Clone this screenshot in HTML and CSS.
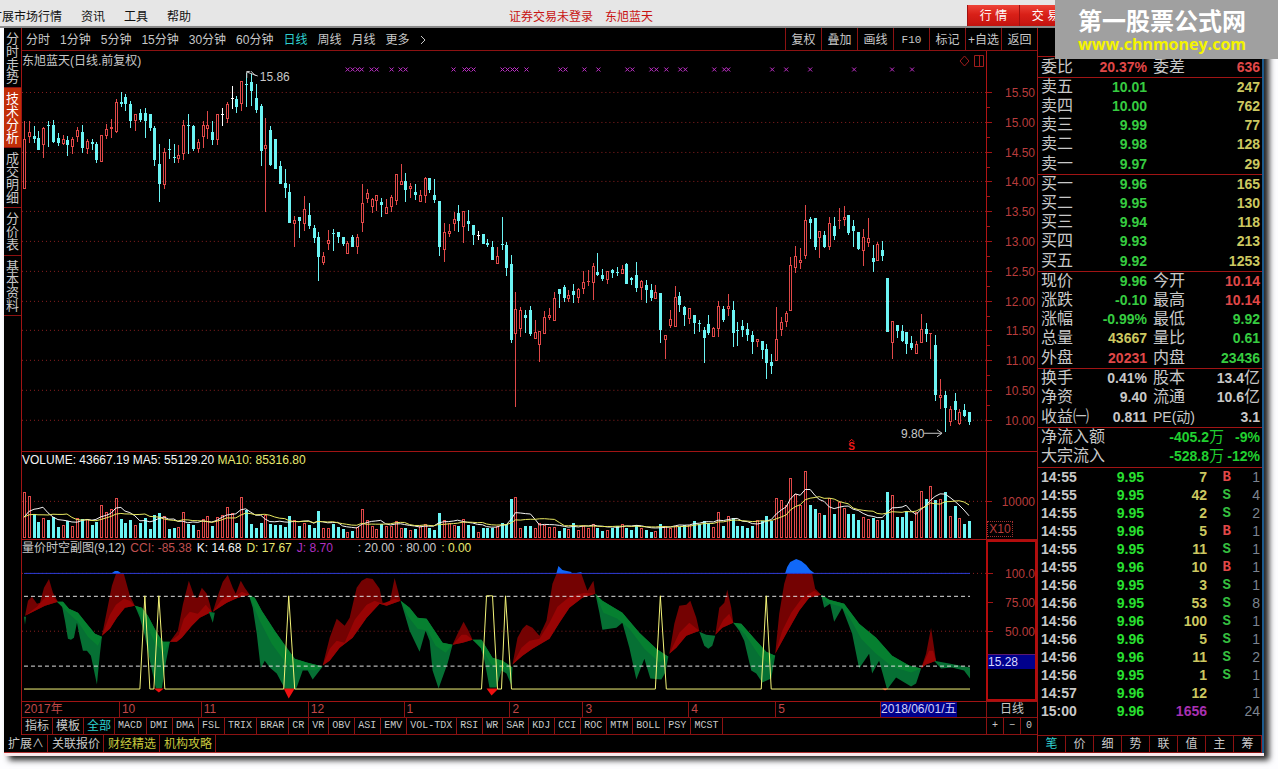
FILE: index.html
```html
<!DOCTYPE html>
<html lang="zh-CN">
<head>
<meta charset="utf-8">
<title>东旭蓝天 日线</title>
<link rel="stylesheet" href="styles.css">
</head>
<body>
<header class="menubar">
  <nav class="menu">
    <button>扩展市场行情</button><button>资讯</button><button>工具</button><button>帮助</button>
  </nav>
  <div class="session"><span>证券交易未登录</span><span>东旭蓝天</span></div>
  <div class="modes"><button>行 情</button><button>交 易</button></div>
</header>

<main class="window">
  <section class="left">
    <div class="workspace">
      <nav class="side-tabs">
        <button class="side-4">分时走势</button>
        <button class="side-4 active">技术分析</button>
        <button class="side-4">成交明细</button>
        <button class="side-3">分价表</button>
        <button class="side-4">基本资料</button>
      </nav>
      <div class="stack">
        <div class="toolbar">
          <div class="periods">
            <button>分时</button><button>1分钟</button><button>5分钟</button><button>15分钟</button><button>30分钟</button><button>60分钟</button><button class="on">日线</button><button>周线</button><button>月线</button><button>更多</button><button aria-label="展开"><svg width="6" height="10" viewBox="0 0 6 10"><path d="M1 1L5 5L1 9"/></svg></button>
          </div>
          <div class="actions">
            <button>复权</button><button>叠加</button><button>画线</button><button class="song">F10</button><button>标记</button><button>+自选</button><button>返回</button>
          </div>
        </div>

        <div class="row price-row">
          <div class="plot">
            <svg id="price" class="fill" viewBox="22 51 965 400" preserveAspectRatio="none"></svg>
            <p class="legend title">东旭蓝天(日线.前复权)</p>
            <svg class="corner" width="26" height="12" viewBox="0 0 26 12"><path d="M5.5 1L10 6L5.5 11L1 6Z M15.5 .5H24.5V11.5H15.5Z M20.5 .5V11.5"/></svg>
          </div>
          <div class="axis price-axis">
            <span>15.50</span><span>15.00</span><span>14.50</span><span>14.00</span><span>13.50</span><span>13.00</span><span>12.50</span><span>12.00</span><span>11.50</span><span>11.00</span><span>10.50</span><span>10.00</span>
          </div>
        </div>

        <div class="row volume-row">
          <div class="plot">
            <svg id="volume" class="fill" viewBox="22 452 965 87" preserveAspectRatio="none"></svg>
            <p class="legend"><span class="white">VOLUME: 43667.19</span> <span class="white">MA5: 55129.20</span> <span class="yellow">MA10: 85316.80</span></p>
          </div>
          <div class="axis volume-axis"><span>10000</span><span class="unit">X10</span></div>
        </div>

        <div class="row indicator-row">
          <div class="plot">
            <svg id="indicator" class="fill" viewBox="22 539 965 162" preserveAspectRatio="none">
              <path class="grid-dot" d="M22 572.5H987M22 630.5H987"/>
              <g class="bull-dark">
                <path d="M25 615L28 600L32 596L37 603L40 602L44 587L49 578L53 592L58 601L45 605L37 609Z"/>
                <path d="M102 635L107 610L112 585L116 573H124L130 595L135 605L125 607L117 617L110 628Z"/>
                <path d="M170 641L178 630L183 604L189 580L195 597L198 597L202 587L207 593L210 603L212 611L200 617L192 625L182 637L177 641Z"/>
                <path d="M213 611L218 595L223 581L228 574L233 587L236 593L241 580L245 587L250 594L238 597L227 602Z"/>
                <path d="M323 665L330 637L337 618L345 625L350 617L357 587L362 580L367 577L373 578L380 588L383 602H390L395 577L401 600L387 605L380 603L367 617L353 637L340 647L330 660Z"/>
                <path d="M453 644L458 633L464 621L469 630L473 639L463 642Z"/>
                <path d="M513 664L518 637L523 628L527 624L533 627L540 635L547 620L553 583L557 573H582L588 590L594 580L596 593L583 597L570 607L560 622L550 638L533 648L523 655Z"/>
                <path d="M670 653L675 623L680 605L687 604L691 600L697 617L700 630L687 635L677 647Z"/>
                <path d="M716 634L720 607L725 602L728 589L732 607L734 622L723 627Z"/>
                <path d="M776 653L780 613L785 583L788 573H813L816 588L822 594L810 597L800 610L787 633Z"/>
                <path d="M922 668L927 653L932 627L937 660L927 664Z"/>
              </g>
              <g class="bull">
                <path d="M25 615L37 606L44 598L50 594L58 601L45 605L37 609Z"/>
                <path d="M102 635L110 614L116 604L124 598L130 600L135 605L125 607L117 617L110 628Z"/>
                <path d="M170 641L179 634L184 618L190 611L198 613L206 604L212 611L200 617L192 625L182 637L177 641Z"/>
                <path d="M213 611L221 600L228 594L235 596L242 591L250 594L238 597L227 602Z"/>
                <path d="M323 665L330 648L337 640L345 642L355 619L367 604L375 600L383 603L395 598L401 600L387 605L380 603L367 617L353 637L340 647L330 660Z"/>
                <path d="M453 644L462 634L467 634L473 639L463 642Z"/>
                <path d="M513 664L522 647L530 640L540 638L550 622L558 606L570 596L585 592L596 593L583 597L570 607L560 622L550 638L533 648L523 655Z"/>
                <path d="M670 653L680 632L690 622L700 630L687 635L677 647Z"/>
                <path d="M716 634L724 619L730 613L734 622L723 627Z"/>
                <path d="M776 653L783 630L792 612L803 597L815 590L822 594L810 597L800 610L787 633Z"/>
                <path d="M922 668L930 650L934 650L937 660L927 664Z"/>
              </g>
              <g class="bear-dark">
                <path d="M24 616H26L25 624Z M209 611L215 612L213 622Z"/>
                <path d="M57 601H63L69 608L78 612L86 622L95 633L102 636L100 653L97 684L91 655L87 650H83L80 637L77 622L74 637L71 639L68 638L65 620L62 605Z"/>
                <path d="M135 605L142 607L148 615L157 632L163 641H170L166 662L162 688H156L150 660L145 635L140 617Z"/>
                <path d="M249 594L255 597L262 610L275 630L287 647L295 658L307 662L323 666L313 679L308 670H303L297 687L293 690L285 688L277 673L270 667L265 660L261 668L257 633L253 607Z"/>
                <path d="M401 600L410 607L418 617L427 618L433 627L443 642L453 644L448 663L439 688L433 670L430 640L426 630L420 651L410 630L405 613Z"/>
                <path d="M473 639H482L493 657L503 660L513 667L512 685L507 673L502 670L497 687H490L485 660L480 643Z"/>
                <path d="M596 593L603 600L623 612L640 632L657 648L669 656L666 672L662 679L651 678L645 658L637 679L630 647L623 622L617 627L603 629L600 612Z"/>
                <path d="M700 631L707 634L716 635L713 645L709 648L705 645Z"/>
                <path d="M734 622L742 623L757 640L767 651L776 655L772 678L763 682L757 673L752 670L745 640L740 630Z"/>
                <path d="M822 594L830 599L845 603L860 623L877 637L893 655L910 665L922 668L917 683L912 686L897 677L888 689L880 660L873 673L870 653L860 668L853 633L843 607L835 621L831 603L825 607Z"/>
                <path d="M935 660L950 663L971 667V678L965 670L953 667L942 668Z"/>
              </g>
              <g class="bear">
                <path d="M57 601H63L69 608L78 612L86 622L95 633L102 636L98 645L88 636L78 621L68 612Z"/>
                <path d="M135 605L142 607L148 615L157 632L163 641H170L164 652L155 642L147 625Z"/>
                <path d="M249 594L255 597L262 610L275 630L287 647L295 658L307 662L323 666L315 670L300 668L288 665L272 643L260 620Z"/>
                <path d="M401 600L410 607L418 617L427 618L433 627L443 642L453 644L446 652L436 645L428 630L418 628L408 615Z"/>
                <path d="M473 639H482L493 657L503 660L513 667L508 670L492 664L482 648Z"/>
                <path d="M596 593L603 600L623 612L640 632L657 648L669 656L660 662L645 648L630 628L618 618L604 612Z"/>
                <path d="M734 622L742 623L757 640L767 651L776 655L770 664L760 655L746 634Z"/>
                <path d="M822 594L830 599L845 603L860 623L877 637L893 655L910 665L922 668L912 672L893 666L877 653L862 638L850 616L842 606L828 602Z"/>
              </g>
              <path class="over" d="M112 572L115 570H118L121 572Z M557 572L559 565L563 569L572 571V572Z M577 572L582 571V572Z M786 572L788 566L791 561L797 558L802 560L807 564L811 569L815 572Z"/>
              <path class="under" d="M154 688H164L159 692Z M284 688H295L289 698Z M487 688H499L492 695Z M883 688H889L886 690Z"/>
              <path class="limit" d="M24 572.5H971"/>
              <path class="bands" d="M24 595.5H971M24 665.5H971"/>
              <path class="signal" d="M24 688.5H140L145 595L150 688.5H154L159 595L165 688.5H284L289 595L295 688.5H482L487 595H493L498 688.5H502L506 595L512 688.5H656L661 595L667 688.5H762L767 595L772 688.5H971"/>
            </svg>
            <p class="legend spaced"><span>量价时空副图(9,12)</span><span class="rose">CCI: -85.38</span><span class="white">K: 14.68</span><span class="yellow">D: 17.67</span><span class="violet">J: 8.70</span><span class="levels">: 20.00</span><span>: 80.00</span><span class="yellow">: 0.00</span></p>
          </div>
          <div class="axis indicator-axis"><span>100.0</span><span>75.00</span><span>50.00</span><span class="cursor">15.28</span></div>
        </div>

        <div class="dates">
          <div class="months">
            <span>2017年</span><span>10</span><span>11</span><span>12</span><span>1</span><span>2</span><span>3</span><span>4</span><span>5</span><span><b>2018/06/01/五</b></span>
          </div>
          <div class="cycle">日线</div>
        </div>

        <div class="indicators">
          <button class="cjk">指标</button><button class="cjk">模板</button><button class="cjk on">全部</button><button>MACD</button><button>DMI</button><button>DMA</button><button>FSL</button><button>TRIX</button><button>BRAR</button><button>CR</button><button>VR</button><button>OBV</button><button>ASI</button><button>EMV</button><button>VOL-TDX</button><button>RSI</button><button>WR</button><button>SAR</button><button>KDJ</button><button>CCI</button><button>ROC</button><button>MTM</button><button>BOLL</button><button>PSY</button><button>MCST</button>
          <div class="zoom"><button>+</button><button>−</button><button>0</button></div>
        </div>
      </div>
    </div>
    <nav class="extras">
      <button>扩展∧</button><button>关联报价</button><button class="gold">财经精选</button><button class="gold">机构攻略</button>
    </nav>
  </section>

  <aside class="quote">
    <div class="head"></div>
    <table class="book">
      <colgroup><col class="c1"><col class="c2"><col class="c3"><col></colgroup>
      <tbody>
        <tr><th>委比</th><td class="red">20.37%</td><th class="second">委差</th><td class="red">636</td></tr>
      </tbody>
      <tbody>
        <tr><th>卖五</th><td class="green">10.01</td><td></td><td class="qty">247</td></tr>
        <tr><th>卖四</th><td class="green">10.00</td><td></td><td class="qty">762</td></tr>
        <tr><th>卖三</th><td class="green">9.99</td><td></td><td class="qty">77</td></tr>
        <tr><th>卖二</th><td class="green">9.98</td><td></td><td class="qty">128</td></tr>
        <tr><th>卖一</th><td class="green">9.97</td><td></td><td class="qty">29</td></tr>
      </tbody>
      <tbody>
        <tr><th>买一</th><td class="green">9.96</td><td></td><td class="qty">165</td></tr>
        <tr><th>买二</th><td class="green">9.95</td><td></td><td class="qty">130</td></tr>
        <tr><th>买三</th><td class="green">9.94</td><td></td><td class="qty">118</td></tr>
        <tr><th>买四</th><td class="green">9.93</td><td></td><td class="qty">213</td></tr>
        <tr><th>买五</th><td class="green">9.92</td><td></td><td class="qty">1253</td></tr>
      </tbody>
      <tbody>
        <tr><th>现价</th><td class="green">9.96</td><th class="second">今开</th><td class="red">10.14</td></tr>
        <tr><th>涨跌</th><td class="green">-0.10</td><th class="second">最高</th><td class="red">10.14</td></tr>
        <tr><th>涨幅</th><td class="green">-0.99%</td><th class="second">最低</th><td class="green">9.92</td></tr>
        <tr><th>总量</th><td class="qty">43667</td><th class="second">量比</th><td class="green">0.61</td></tr>
        <tr><th>外盘</th><td class="red">20231</td><th class="second">内盘</th><td class="green">23436</td></tr>
      </tbody>
      <tbody>
        <tr><th>换手</th><td>0.41%</td><th class="second">股本</th><td>13.4<i>亿</i></td></tr>
        <tr><th>净资</th><td>9.40</td><th class="second">流通</th><td>10.6<i>亿</i></td></tr>
        <tr><th>收益㈠</th><td>0.811</td><th class="second pe">PE(动)</th><td>3.1</td></tr>
      </tbody>
    </table>
    <table class="flow">
      <tr><th>净流入额</th><td>-405.2<i>万</i></td><td class="pct">-9%</td></tr>
      <tr><th>大宗流入</th><td>-528.8<i>万</i></td><td class="pct">-12%</td></tr>
    </table>
    <table class="ticks">
      <colgroup><col class="t1"><col class="t2"><col class="t3"><col class="t4"><col></colgroup>
      <tr><td>14:55</td><td>9.95</td><td>7</td><td class="buy">B</td><td>1</td></tr>
      <tr><td>14:55</td><td>9.95</td><td>42</td><td>S</td><td>4</td></tr>
      <tr><td>14:55</td><td>9.95</td><td>2</td><td>S</td><td>2</td></tr>
      <tr><td>14:55</td><td>9.96</td><td>5</td><td class="buy">B</td><td>1</td></tr>
      <tr><td>14:55</td><td>9.95</td><td>11</td><td>S</td><td>1</td></tr>
      <tr><td>14:55</td><td>9.96</td><td>10</td><td class="buy">B</td><td>1</td></tr>
      <tr><td>14:56</td><td>9.95</td><td>3</td><td>S</td><td>1</td></tr>
      <tr><td>14:56</td><td>9.95</td><td>53</td><td>S</td><td>8</td></tr>
      <tr><td>14:56</td><td>9.96</td><td>100</td><td>S</td><td>1</td></tr>
      <tr><td>14:56</td><td>9.96</td><td>5</td><td>S</td><td>1</td></tr>
      <tr><td>14:56</td><td>9.96</td><td>11</td><td>S</td><td>2</td></tr>
      <tr><td>14:56</td><td>9.95</td><td>1</td><td>S</td><td>1</td></tr>
      <tr><td>14:57</td><td>9.96</td><td>12</td><td></td><td>1</td></tr>
      <tr><td>15:00</td><td>9.96</td><td class="big">1656</td><td></td><td>24</td></tr>
    </table>
    <nav class="quote-tabs">
      <button class="on">笔</button><button>价</button><button>细</button><button>势</button><button>联</button><button>值</button><button>主</button><button>筹</button>
    </nav>
  </aside>
</main>

<div class="badge"><strong>第一股票公式网</strong><a href="#">www.chnmoney.com</a></div>
<script src="chart.js"></script>
</body>
</html>
```

FILE: styles.css
```css
* { box-sizing: border-box; }

html { height: 100%; }

body {
  margin: 0;
  min-height: 100%;
  display: flex;
  flex-direction: column;
  position: relative;
  background: #fdfdff;
  color: #c8c8c8;
  font: 12px/16px "Liberation Sans", "Noto Sans CJK SC", sans-serif;
  overflow: hidden;
}

button {
  margin: 0;
  padding: 0;
  border: 0;
  background: none;
  color: inherit;
  font: inherit;
  white-space: nowrap;
}

p { margin: 0; }

/* Top menu */
.menubar {
  height: 28px;
  display: grid;
  grid-template-columns: 509fr 458fr 311fr;
  align-items: center;
  padding-top: 5px;
  background: #e6e6e6;
  border-bottom: 2px solid #8f8f8f;
  color: #111;
}

.menu { display: flex; gap: 19px; margin-left: -10px; padding-top: 2px; }

.session { display: flex; gap: 12px; color: #c81414; padding-top: 2px; }

.modes { display: flex; align-self: stretch; }

.modes button {
  width: 52px;
  flex: none;
  color: #fff;
  background: linear-gradient(#ee4438, #d92018 45%, #c41410);
  border-left: 1px solid #a01010;
}

/* Window */
.window {
  flex: 1;
  display: grid;
  grid-template-columns: 1fr 226px;
  margin: 0 14px 13px 4px;
  background: #000;
  border-bottom: 3px solid #fbe9ec;
  box-shadow: 5px 4px 6px 0 #222;
}

.left { display: flex; flex-direction: column; min-width: 0; border-right: 1px solid #a01414; }

.workspace { flex: 1; display: flex; min-height: 0; }

.side-tabs { width: 17px; display: flex; flex-direction: column; }

.side-tabs button {
  padding: 0 2px;
  font-size: 13px;
  line-height: 13px;
  white-space: normal;
  border-bottom: 1px solid #8c1212;
}

.side-4 { height: 60px; }
.side-3 { height: 48px; }
.side-tabs .active { background: #c22e08; color: #fff; }

.stack {
  flex: 1;
  min-width: 0;
  display: flex;
  flex-direction: column;
  border-left: 1px solid #a01414;
}

/* Toolbar */
.toolbar {
  height: 23px;
  display: flex;
  justify-content: space-between;
  border-bottom: 1px solid #8c1212;
}

.periods { display: flex; gap: 10px; padding: 1px 0 0 4px; }
.periods svg { display: block; fill: none; stroke: #c8c8c8; }
.actions { display: flex; }
.actions button { width: 36px; padding-top: 1px; border-left: 1px solid #8c1212; }

.on { color: #2fd0d0; }

.song { font-family: "Liberation Mono", monospace; font-size: 11px; }

/* Chart rows */
.row { display: flex; min-height: 0; }
.price-row { flex: 401; border-bottom: 1px solid #a01414; }
.volume-row { flex: 87; border-bottom: 1px solid #a01414; }
.indicator-row { flex: 162; border-bottom: 1px solid #a01414; }

.plot { flex: 1; min-width: 0; position: relative; }

.fill { position: absolute; inset: 0; width: 100%; height: 100%; display: block; }

.legend { position: absolute; left: 0; top: 0; white-space: pre; line-height: 16px; }
.spaced { display: flex; gap: 5px; }
.title { top: 2px; }

.corner { position: absolute; right: 1px; top: 4px; fill: none; stroke: #a01c1c; }

.white { color: #f4f4f4; }
.yellow { color: #e8e870; }
.rose { color: #c05050; }
.violet { color: #b030c0; }
.levels { padding-left: 20px; }

.axis {
  width: 51px;
  flex: none;
  display: flex;
  flex-direction: column;
  border-left: 1px solid #b01414;
  color: #b83c3c;
  text-align: right;
  line-height: 14px;
  padding-right: 2px;
}

.axis span { position: relative; }

.axis span::before {
  content: "";
  position: absolute;
  left: 0;
  top: 6px;
  width: 5px;
  border-top: 1px solid #a01414;
}

.price-axis { justify-content: space-between; padding-top: 35px; padding-bottom: 23px; }

.price-axis span:not(:last-child)::after {
  content: "";
  position: absolute;
  left: 0;
  top: 21px;
  width: 3px;
  border-top: 1px solid #a01414;
}

.volume-axis { justify-content: flex-end; gap: 12px; padding-bottom: 2px; }

.volume-axis .unit {
  width: 26px;
  border: 1px dotted #a03030;
  text-align: center;
}

.axis .unit::before, .axis .cursor::before { display: none; }

.indicator-axis { border: 2px solid #b40c0c; padding: 25px 0 0 0; }
.indicator-axis span { margin-bottom: 15px; }

.indicator-axis .cursor {
  background: #00008c;
  border-top: 1px solid #5a1a70;
  color: #d8d8ff;
  text-align: left;
}

/* Chart drawing */
.grid-dot { fill: none; stroke: #8c2020; stroke-dasharray: 1 3; }
.up { fill: #000; stroke: #e04848; }
.up-wick { fill: #e04848; }
.down { fill: #6cf4f4; }
.flat { fill: #fff; }
.mark { fill: none; stroke: #c030c8; }
.ma5 { fill: none; stroke: #f4f4f4; }
.ma10 { fill: none; stroke: #e8e860; }
.callout { fill: none; stroke: #c8c8c8; }
.note { fill: #c8c8c8; font-size: 12px; }
.ex { fill: #f01818; font-size: 10px; font-weight: bold; }
.ex-line { fill: none; stroke: #f01818; }
.bull-dark { fill: #740202; }
.bull { fill: #980404; }
.bear-dark { fill: #067034; }
.bear { fill: #068030; }
.over { fill: #1068f8; }
.under { fill: #f01010; }
.limit { stroke: #2c3cd8; }
.bands { stroke: #e0e0e0; stroke-dasharray: 4 3; }
.signal { fill: none; stroke: #f4f478; }

/* Date scale */
.dates { display: flex; height: 16px; border-bottom: 1px solid #8c1212; }

.months {
  flex: 1;
  display: grid;
  grid-template-columns: 97fr 82fr 107fr 96fr 106fr 73fr 106fr 87fr 105fr 106fr;
  color: #c04848;
  line-height: 15px;
}

.months span { padding-left: 2px; border-left: 1px solid #8c1212; white-space: nowrap; }
.months span:first-child { border-left: 0; }
.months span:last-child { padding-left: 0; }

.months b {
  display: inline-block;
  font-weight: normal;
  background: #00008c;
  color: #d0d0f8;
}

.cycle { width: 51px; text-align: center; line-height: 15px; border-left: 1px solid #8c1212; }

/* Indicator tabs */
.indicators {
  display: flex;
  height: 17px;
  border-bottom: 1px solid #8c1212;
  font: 10px/16px "Liberation Mono", monospace;
}

.indicators > button { padding: 0 4px; border-right: 1px solid #8c1212; }
.indicators > button:nth-child(n+4) { padding: 0 4px 0 3px; }
.indicators > .cjk { font: 12px/16px "Liberation Sans", "Noto Sans CJK SC", sans-serif; padding: 0 3px; }

.zoom { display: flex; width: 51px; margin-left: auto; border-left: 1px solid #8c1212; }
.zoom button { flex: 1; }
.zoom button + button { border-left: 1px solid #8c1212; }

.extras { display: flex; height: 18px; border-bottom: 1px solid #b03030; }
.extras button { padding: 0 3px 0 4px; border-right: 1px solid #8c1212; }
.gold { color: #c8c83c; }

/* Quote panel */
.quote {
  display: flex;
  flex-direction: column;
  border-right: 2px solid #1c5a8c;
  font-size: 14px;
  line-height: 18px;
}

.head { height: 28px; }

.quote table {
  width: 100%;
  table-layout: fixed;
  border-collapse: collapse;
  font-weight: bold;
}

.quote th, .quote i {
  font: 16px/18px "Liberation Sans", "Noto Sans CJK SC", sans-serif;
}

.quote th { padding: 0 0 0 3px; text-align: left; white-space: nowrap; }
.quote td { padding: 0 2px 0 0; text-align: right; }

.book tbody { border-top: 1px solid #a01414; }
.book tr, .flow tr { height: 19px; }
.book tbody tr:last-child { height: 21px; }
.book tbody:last-child tr:last-child { height: 20px; }
.c1 { width: 50px; }
.c2 { width: 61px; }
.c3 { width: 46px; }
.quote .second { padding-left: 4px; }
.quote .pe { font-size: 14px; }

.red { color: #e04848; }
.green { color: #36cc40; }
.qty { color: #ccc860; }

.flow, .ticks { border-top: 1px solid #a01414; }
.quote .flow { color: #20d030; margin-bottom: 2px; }
.flow th { color: #c8c8c8; width: 80px; }
.flow .pct { width: 36px; }
.flow i { font-size: 15px; }

.ticks tr { height: 18px; }
.t1 { width: 48px; }
.t2 { width: 60px; }
.t3 { width: 63px; }
.t4 { width: 24px; }
.ticks td:first-child { text-align: left; padding-left: 3px; }
.ticks td:nth-child(2) { color: #28e030; }
.ticks td:nth-child(3) { color: #ccc860; }
.ticks td:nth-child(4) { color: #36c040; font-family: "Liberation Mono", monospace; }
.ticks td:nth-child(5) { color: #7c8490; font-weight: normal; }
.ticks .buy.buy { color: #e04848; }
.ticks .big.big { color: #a830b0; }

.quote-tabs {
  display: grid;
  grid-template-columns: repeat(8, 1fr);
  height: 18px;
  margin-top: auto;
  border: solid #8c1212;
  border-width: 1px 0;
}

.quote-tabs button { font-size: 12px; line-height: 16px; border-right: 1px solid #8c1212; }

/* Site badge */
.badge {
  position: absolute;
  top: 0;
  right: 0;
  width: 223px;
  height: 59px;
  padding: 5px 0 0 23px;
  display: flex;
  flex-direction: column;
  background: #a0a0a0;
}

.badge strong { font: bold 24px/29px "Noto Sans CJK SC", sans-serif; color: #fff; }

.badge a {
  font: bold 16px/20px "Open Sans", sans-serif;
  color: #f4f400;
  text-decoration: none;
}
```

FILE: chart.js
```js
// One entry per trading day: kind (r up, c down, w flat), high, body top, body bottom, low.
const days = `r121,139,189,189 r121,132,137,143 c126,136,139,143 c131,138,150,150 r127,128,145,158 c121,125,126,147 c120,125,142,143 c133,138,143,146 r135,139,144,145 c136,140,145,156 r137,139,147,154 r127,130,137,142 c125,132,148,153 r139,141,149,154 c139,142,144,150 c142,144,160,163 r135,135,162,162 r124,129,136,139 r119,127,129,138 r99,102,132,133
c92,102,104,107 c94,97,104,111 c101,104,121,128 r114,114,121,131 c109,113,120,122 c108,113,121,138 c114,114,128,131 c126,128,160,166 c144,164,184,202 r148,152,185,189 c139,149,150,159 c144,157,158,163 r145,155,159,163 r120,125,154,160 c114,125,126,154 c125,126,149,151 r139,142,149,153 r121,125,137,148 r111,125,129,139 c121,132,140,145
r114,114,140,145 w108,114,115,126 r102,104,119,123 w86,98,99,109 c96,99,107,113 r81,81,104,111 c73,84,85,107 c74,82,91,106 c84,98,110,113 c104,106,151,166 r118,145,149,212 c126,130,165,166 c139,139,169,169 c161,166,184,184 c169,183,188,198 c184,192,223,223 r216,220,224,247 c217,217,221,238 r196,209,224,231 c203,215,226,229
c225,228,238,243 c232,237,257,281 r252,256,263,265 r230,240,244,250 c229,233,234,251 c232,232,237,243 c237,237,244,246 r241,243,254,254 c235,237,247,247 r234,237,247,254 r184,203,223,232 r189,193,199,203 r198,199,207,213 r195,195,201,211 c198,202,205,217 r199,207,214,214 r195,197,207,212 r174,174,201,205 r164,181,185,185 c173,181,190,202
r183,186,189,198 c184,192,195,200 r190,195,202,202 r177,178,196,203 c178,178,190,193 c179,195,200,203 c201,201,247,256 r223,232,250,262 r224,231,234,237 r212,219,224,231 c205,213,221,232 r211,211,227,243 c210,221,224,231 c225,225,235,245 w231,235,236,240 c234,234,244,244 c239,243,245,247 c241,247,260,260 r247,256,264,264 c217,244,245,250
c242,245,268,276 c255,264,340,343 r292,309,334,407 r307,310,329,337 c310,315,318,333 c306,310,334,336 r320,332,339,339 r331,331,345,362 r311,317,334,334 r308,315,318,320 r292,298,321,321 c289,289,294,308 c285,287,298,302 r290,295,299,302 c284,291,295,303 r288,289,298,303 r271,282,289,294 r270,281,282,286 r263,266,283,300 c253,272,275,276
c269,275,279,281 r271,271,280,284 c269,270,273,278 c267,272,273,276 r265,269,274,274 c263,264,284,284 c277,278,280,285 c262,275,288,292 r280,281,288,300 c280,285,290,303 c284,290,298,301 r285,292,299,299 c293,293,330,343 r335,335,340,359 r310,319,326,328 r286,297,327,327 c292,296,305,312 c306,307,315,326 r308,308,319,324 c315,315,323,334
c320,323,324,332 c327,330,338,363 c315,324,333,335 r327,328,337,337 r301,306,329,337 c306,309,320,322 r294,306,309,316 c301,310,333,347 c322,330,331,346 c320,326,330,337 c323,329,335,341 c331,335,342,354 r339,339,342,347 c341,341,350,359 c344,349,363,379 c354,362,366,374 r307,339,361,361 r317,322,330,336 r311,313,322,327 r257,265,311,311
r246,256,268,273 r248,260,263,269 r205,220,256,259 c217,219,223,239 c218,218,247,250 r231,231,238,258 c231,235,247,248 r217,223,247,250 c217,226,236,240 r208,220,221,229 r206,217,220,226 c215,215,233,235 c220,226,231,247 c232,232,249,250 r229,237,251,266 r218,238,243,247 c245,258,262,272 r242,244,261,261 c241,250,256,261 c278,278,332,332
r321,321,343,359 c325,325,331,338 c325,331,341,342 c332,332,344,354 c336,343,348,350 r341,344,354,354 r314,329,343,343 c323,329,334,342 r333,333,334,359 c335,345,395,401 r379,395,398,409 c391,395,408,432 r406,409,422,426 c393,401,410,420 r409,412,424,425 c404,410,416,417 c412,412,422,425`
  .split(/\s+/)
  .map(s => [s[0], ...s.slice(1).split(",").map(Number)]);

const volumes = [
  46, 42, 24, 16, 20, 18, 21, 11, 13, 17, 12, 20, 19, 19, 13, 16, 33, 26, 29, 40, 19, 15, 18, 13, 15, 20, 9, 23, 25, 22, 9, 10,
  11, 26, 14, 13, 8, 19, 22, 12, 21, 23, 31, 25, 15, 41, 28, 14, 10, 15, 23, 14, 13, 13, 11, 22, 18, 12, 15, 13, 10, 27, 10, 10,
  14, 11, 9, 6, 7, 11, 29, 18, 12, 9, 14, 12, 12, 17, 10, 10, 8, 9, 12, 14, 10, 8, 25, 18, 15, 13, 12, 19, 13, 12, 6, 10,
  10, 10, 12, 15, 14, 39, 41, 10, 12, 12, 10, 15, 13, 11, 11, 7, 10, 9, 15, 8, 12, 10, 14, 10, 7, 8, 10, 12, 14, 10, 8, 13,
  10, 8, 6, 7, 14, 12, 10, 12, 11, 13, 13, 17, 14, 17, 15, 11, 26, 12, 22, 20, 12, 12, 10, 12, 18, 17, 22, 17, 40, 38, 33, 60,
  44, 33, 67, 33, 29, 25, 23, 40, 24, 36, 30, 24, 24, 18, 21, 19, 20, 18, 18, 46, 43, 21, 21, 27, 17, 26, 47, 39, 52, 38, 39, 46,
  22, 32, 20, 14, 17
];

// Days before the first visible one, used by the moving averages.
const earlier = [20, 20, 20, 20, 20, 13, 13, 13, 13];

const marks = [348, 353, 358, 362, 372, 377, 392, 401, 406, 454, 465, 469, 474, 503, 508, 513, 517, 527, 561, 566, 585, 599,
  628, 633, 652, 657, 667, 681, 686, 715, 725, 729, 773, 787, 811, 855, 893, 913];

const center = i => 24 + Math.round(i * 4.827);
const rect = (cls, x, y, w, h) =>
  `<rect class="${cls}" x="${x}" y="${y}" width="${w}" height="${h}" shape-rendering="crispEdges"/>`;

function drawPrice() {
  let grid = "";
  for (let k = 0; k < 12; k++) grid += `M22 ${Math.round(92 + k * 29.8) + 0.5}H987`;
  let out = `<path class="grid-dot" d="${grid}"/>`;
  out += `<path class="mark" d="${marks.map(x => `M${x - 2} 67.5l4 4m0 -4l-4 4`).join("")}"/>`;
  days.forEach(([kind, high, top, bottom, low], i) => {
    const x = center(i);
    if (kind === "r") {
      out += rect("up-wick", x, high, 1, low - high);
      out += bottom - top < 2
        ? rect("up-wick", x - 1, top, 3, 1)
        : rect("up", x - 0.5, top + 0.5, 2, bottom - top - 1);
    } else {
      const cls = kind === "c" ? "down" : "flat";
      out += rect(cls, x, high, 1, Math.max(1, low - high));
      out += rect(cls, x - 1, top, 3, Math.max(1, bottom - top));
    }
  });
  out += `<path class="callout" d="M247 78V71.5H250M247 72L258 76M251 71L256 76M925 433.5H943M938 430L943 433.5L938 437"/>`;
  out += `<text class="note" x="260" y="81">15.86</text><text class="note" x="902" y="438">9.80</text>`;
  out += `<text class="ex" x="849" y="450">S</text><path class="ex-line" d="M850 442L852.500 439.500L855 442"/>`;
  document.getElementById("price").innerHTML = out;
}

function average(span) {
  const all = earlier.concat(volumes);
  return volumes.map((_, i) => {
    const end = i + earlier.length + 1;
    const sum = all.slice(end - span, end).reduce((a, b) => a + b, 0);
    return `${center(i)},${(537 - sum / span).toFixed(1)}`;
  }).join(" ");
}

function drawVolume() {
  let out = `<path class="grid-dot" d="M22 501.5H987"/>`;
  volumes.forEach((v, i) => {
    const x = center(i);
    out += days[i][0] === "c"
      ? rect("down", x - 1, 538 - v, 3, v)
      : rect("up", x - 0.5, 538.5 - v, 2, v - 1);
  });
  out += `<polyline class="ma5" points="${average(5)}"/><polyline class="ma10" points="${average(10)}"/>`;
  document.getElementById("volume").innerHTML = out;
}

drawPrice();
drawVolume();
```
